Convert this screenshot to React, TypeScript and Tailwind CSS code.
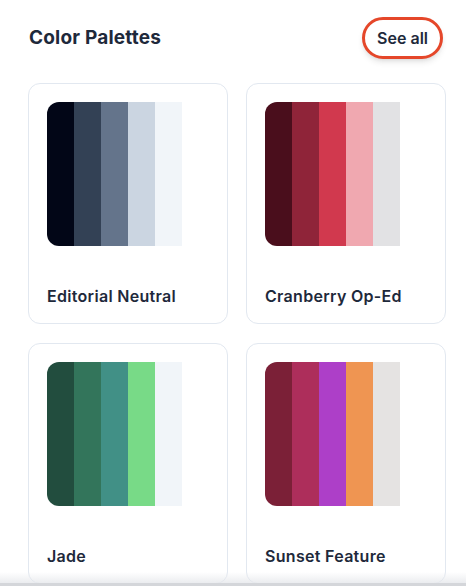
import React from 'react';

interface Palette {
  name: string;
  colors: string[];
}

const palettes: Palette[] = [
  { name: 'Editorial Neutral', colors: ['#020617', '#334155', '#64748b', '#cbd5e1', '#f1f5f9'] },
  { name: 'Cranberry Op-Ed', colors: ['#4a0e1c', '#8f2439', '#d1394e', '#f0a8b0', '#e2e2e4'] },
  { name: 'Jade', colors: ['#224d3e', '#33755b', '#419086', '#78da87', '#f1f5f9'] },
  { name: 'Sunset Feature', colors: ['#7b2037', '#ad2e5b', '#ad3fc8', '#ef9552', '#e5e3e2'] },
];

const PaletteCard: React.FC<{ palette: Palette }> = ({ palette }) => (
  <div className="flex flex-col rounded-xl border border-[#e2e8f0] bg-white px-[18px] pt-[18px] pb-[15px]">
    <div className="flex h-[144px] w-[135px] overflow-hidden rounded-l-xl">
      {palette.colors.map((c, i) => (
        <div key={i} className="h-full w-[27px]" style={{ backgroundColor: c }} />
      ))}
    </div>
    <div className="mt-[38px] text-[16px] leading-6 font-semibold tracking-[0.3px] text-[#1e293b]">
      {palette.name}
    </div>
  </div>
);

const App: React.FC = () => {
  return (
    <div className="relative h-[586px] w-[466px] overflow-hidden bg-white font-['Inter',sans-serif]">
      <div className="flex items-center justify-between pt-[17px] pl-[29px] pr-[23px]">
        <h2 className="text-[19px] font-bold tracking-[0.2px] text-[#1e293b]">Color Palettes</h2>
        <button className="h-[42px] rounded-full border-[3px] border-[#e5472a] bg-white px-[12px] text-[16px] font-semibold text-[#1e293b] shadow-md">
          See all
        </button>
      </div>

      <div className="mt-[24px] grid grid-cols-[200px_200px] gap-x-[18px] gap-y-[19px] pl-[28px]">
        {palettes.map((p) => (
          <PaletteCard key={p.name} palette={p} />
        ))}
      </div>

      <div className="absolute bottom-0 left-0 h-[14px] w-full bg-gradient-to-b from-transparent to-[#e5e7eb]" />
      <div className="absolute bottom-0 left-0 h-[3px] w-full bg-[#d4d6da]" />
    </div>
  );
};

export default App;
